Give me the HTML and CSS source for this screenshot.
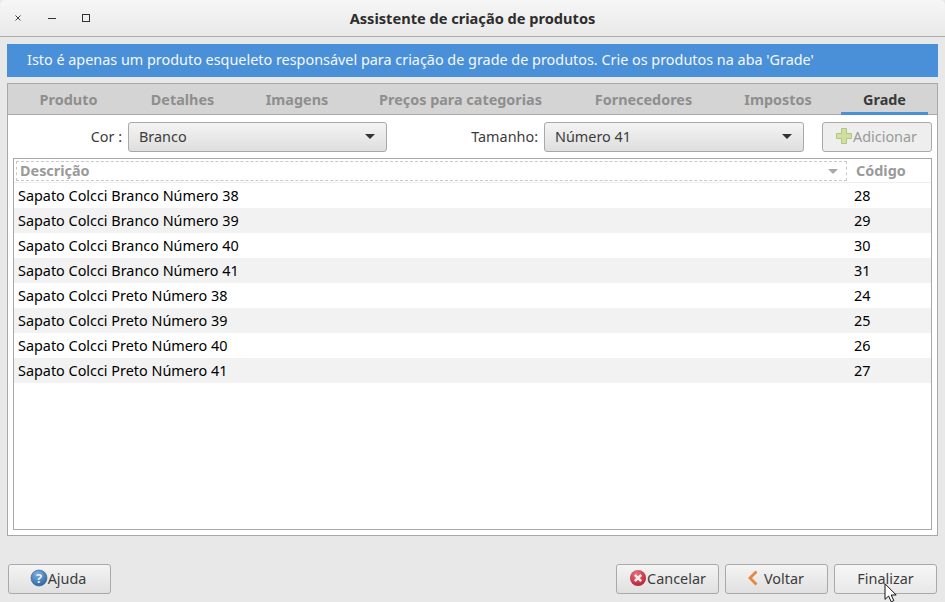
FILE: index.html
```html
<!DOCTYPE html>
<html lang="pt">
<head>
<meta charset="utf-8">
<title>Assistente de criação de produtos</title>
<link rel="stylesheet" href="styles.css">
</head>
<body>
<div class="window">
  <header class="titlebar">
    <div class="controls">
      <svg class="ctl" width="10" height="10" viewBox="0 0 10 10"><path d="M2.5 2.5l5 5M7.5 2.5l-5 5" stroke="#444" stroke-width="1" fill="none"/></svg>
      <svg class="ctl" width="10" height="10" viewBox="0 0 10 10"><path d="M1 5.5h8" stroke="#333" stroke-width="1" fill="none"/></svg>
      <svg class="ctl" width="10" height="10" viewBox="0 0 10 10"><rect x="1.5" y="1.5" width="7" height="7" stroke="#333" stroke-width="1" fill="none"/></svg>
    </div>
    <h1 class="title">Assistente de criação de produtos</h1>
  </header>
  <main class="content">
    <div class="banner">Isto é apenas um produto esqueleto responsável para criação de grade de produtos. Crie os produtos na aba 'Grade'</div>
    <section class="panel">
      <nav class="tabs">
        <span class="tab">Produto</span>
        <span class="tab">Detalhes</span>
        <span class="tab">Imagens</span>
        <span class="tab">Preços para categorias</span>
        <span class="tab">Fornecedores</span>
        <span class="tab">Impostos</span>
        <span class="tab active">Grade</span>
      </nav>
      <div class="form">
        <label class="lbl lbl-cor">Cor :</label>
        <div class="combo combo-cor"><span>Branco</span><i class="arrow"></i></div>
        <label class="lbl lbl-tam">Tamanho:</label>
        <div class="combo combo-tam"><span>Número 41</span><i class="arrow"></i></div>
        <button class="btn btn-add" disabled>
          <svg width="18" height="18" viewBox="0 0 18 18"><path d="M6.5 1.5h5v5h5v5h-5v5h-5v-5h-5v-5h5z" fill="#cfe09a" stroke="#b3c585" stroke-width="1"/></svg>Adicionar
        </button>
      </div>
      <div class="table">
        <div class="thead">
          <div class="th th-desc"><span>Descrição</span><i class="sort"></i></div>
          <div class="th th-code">Código</div>
        </div>
        <div class="row"><span class="c1">Sapato Colcci Branco Número 38</span><span>28</span></div>
        <div class="row"><span class="c1">Sapato Colcci Branco Número 39</span><span>29</span></div>
        <div class="row"><span class="c1">Sapato Colcci Branco Número 40</span><span>30</span></div>
        <div class="row"><span class="c1">Sapato Colcci Branco Número 41</span><span>31</span></div>
        <div class="row"><span class="c1">Sapato Colcci Preto Número 38</span><span>24</span></div>
        <div class="row"><span class="c1">Sapato Colcci Preto Número 39</span><span>25</span></div>
        <div class="row"><span class="c1">Sapato Colcci Preto Número 40</span><span>26</span></div>
        <div class="row"><span class="c1">Sapato Colcci Preto Número 41</span><span>27</span></div>
      </div>
    </section>
    <footer class="actions">
      <button class="btn btn-foot btn-help">
        <svg width="18" height="18" viewBox="0 0 18 18"><defs><radialGradient id="h" cx="40%" cy="25%" r="80%"><stop offset="0" stop-color="#7fb0de"/><stop offset="1" stop-color="#2a64a4"/></radialGradient></defs><circle cx="9" cy="9" r="8" fill="url(#h)" stroke="#2f6096" stroke-width=".6"/><text x="9" y="13.5" text-anchor="middle" class="qm">?</text></svg>Ajuda
      </button>
      <span class="spacer"></span>
      <button class="btn btn-foot">
        <svg width="18" height="18" viewBox="0 0 18 18"><defs><radialGradient id="c" cx="40%" cy="25%" r="80%"><stop offset="0" stop-color="#e8707a"/><stop offset="1" stop-color="#b81f30"/></radialGradient></defs><circle cx="9" cy="9" r="8" fill="url(#c)"/><path d="M5.8 5.8l6.4 6.4M12.2 5.8l-6.4 6.4" stroke="#f4ecec" stroke-width="2.6" fill="none"/></svg>Cancelar
      </button>
      <button class="btn btn-foot btn-back">
        <svg width="12" height="16" viewBox="0 0 12 16"><path d="M9.5 1.5L3 8l6.5 6.5" stroke="#e8853e" stroke-width="2.8" fill="none"/></svg>Voltar
      </button>
      <button class="btn btn-foot btn-finish">Finalizar</button>
    </footer>
  </main>
  <svg class="cursor" width="14" height="20" viewBox="0 0 14 20"><path d="M1 .8v15.6l3.6-3.4 2.6 5.8 2.6-1.2-2.6-5.6h5z" fill="#fff" stroke="#111" stroke-width="1"/></svg>
</div>
</body>
</html>
```
FILE: styles.css
```css
* { box-sizing: border-box; }
html, body { margin: 0; padding: 0; }
body { width: 945px; height: 602px; overflow: hidden; background: #e8e8e8; font-family: "Noto Sans", "Open Sans", sans-serif; font-size: 14.4px; color: #3c3c3c; }
.window { position: relative; width: 945px; height: 602px; display: flex; flex-direction: column; }
.titlebar { height: 37px; flex: none; display: flex; align-items: center; position: relative; background: linear-gradient(#f6f6f6, #e9e9e9); border-bottom: 1px solid #aeaeae; border-radius: 5px 5px 0 0; }
.controls { display: flex; gap: 24px; padding-left: 13px; margin-top: -1px; }
.title { position: absolute; left: 0; right: 0; margin: 0; text-align: center; font-size: 14.6px; font-weight: 700; color: #2d2d2d; }
.content { flex: 1; display: flex; flex-direction: column; padding: 7px 7px 0; }
.banner { height: 33px; flex: none; background: #4a90d9; color: #f4f8fc; padding-left: 20px; line-height: 32px; white-space: nowrap; }
.panel { height: 453px; flex: none; margin-top: 6px; background: #fff; border: 1px solid #a8a8a8; display: flex; flex-direction: column; }
.tabs { height: 31px; flex: none; display: grid; grid-template-columns: 103px 109px 104px 207px 143px 110px 87px; gap: 8px; padding: 0 9px; background: #d4d4d4; border-bottom: 1px solid #a8a8a8; }
.tab { text-align: center; font-weight: 700; color: #8e8e8e; line-height: 31px; white-space: nowrap; }
.tab.active { color: #3a3a3a; height: 31px; border-bottom: 3px solid #4a90d9; }
.form { height: 43px; flex: none; display: flex; align-items: center; padding: 7px 0 6px; }
.lbl { flex: none; color: #3c3c3c; white-space: nowrap; text-align: right; padding-bottom: 2px; }
.lbl-cor { width: 114px; }
.lbl-tam { width: 151px; }
.combo { flex: none; height: 30px; margin-left: 6px; display: flex; align-items: center; justify-content: space-between; padding: 0 11px 2px 10px; background: linear-gradient(#f4f4f4, #dedede); border: 1px solid #a9a9a9; border-radius: 3px; }
.combo-cor { width: 259px; }
.combo-tam { width: 260px; }
.arrow { width: 0; height: 0; border-left: 5px solid transparent; border-right: 5px solid transparent; border-top: 5px solid #333; }
.btn { flex: none; display: inline-flex; align-items: center; justify-content: center; height: 30px; padding: 0 0 2px; font: inherit; color: #3c3c3c; background: linear-gradient(#f4f4f4, #e0e0e0); border: 1px solid #a9a9a9; border-radius: 3px; }
.btn-add { width: 110px; margin-left: 18px; padding: 0 2px 2px 0; color: #9a9a9a; background: #eeeeee; }
.table { height: 372px; flex: none; margin: 0 5px; border: 1px solid #a8a8a8; background: #fff; }
.thead { height: 24px; display: flex; border-bottom: 1px solid #eeeeee; font-weight: 700; color: #9a9a9a; }
.th { height: 20px; margin-top: 2px; line-height: 20px; }
.th-desc { width: 831px; margin-left: 2px; padding: 0 8px 0 3px; display: flex; justify-content: space-between; align-items: center; border: 1px dashed #c8c8c8; }
.th-code { padding-left: 9px; }
.sort { width: 0; height: 0; border-left: 5px solid transparent; border-right: 5px solid transparent; border-top: 5px solid #a8a8a8; }
.row { height: 25px; display: flex; align-items: center; color: #000; }
.row:nth-child(odd) { background: #f2f2f2; }
.c1 { width: 840px; padding-left: 4px; }
.actions { height: 30px; flex: none; margin-top: 28px; display: flex; gap: 6px; padding: 0 1px; }
.btn-foot { width: 103px; }
.btn-foot .qm { font-size: 13px; font-weight: 700; fill: #e8f0f8; }
.btn-help { padding-right: 3px; }
.btn-back { padding-right: 2px; }
.btn-back svg { margin-right: 5px; }
.btn-finish { background: linear-gradient(#f6f6f6, #e8e8e8); }
.spacer { flex: 1; }
.cursor { position: absolute; left: 884px; top: 583px; }
```
